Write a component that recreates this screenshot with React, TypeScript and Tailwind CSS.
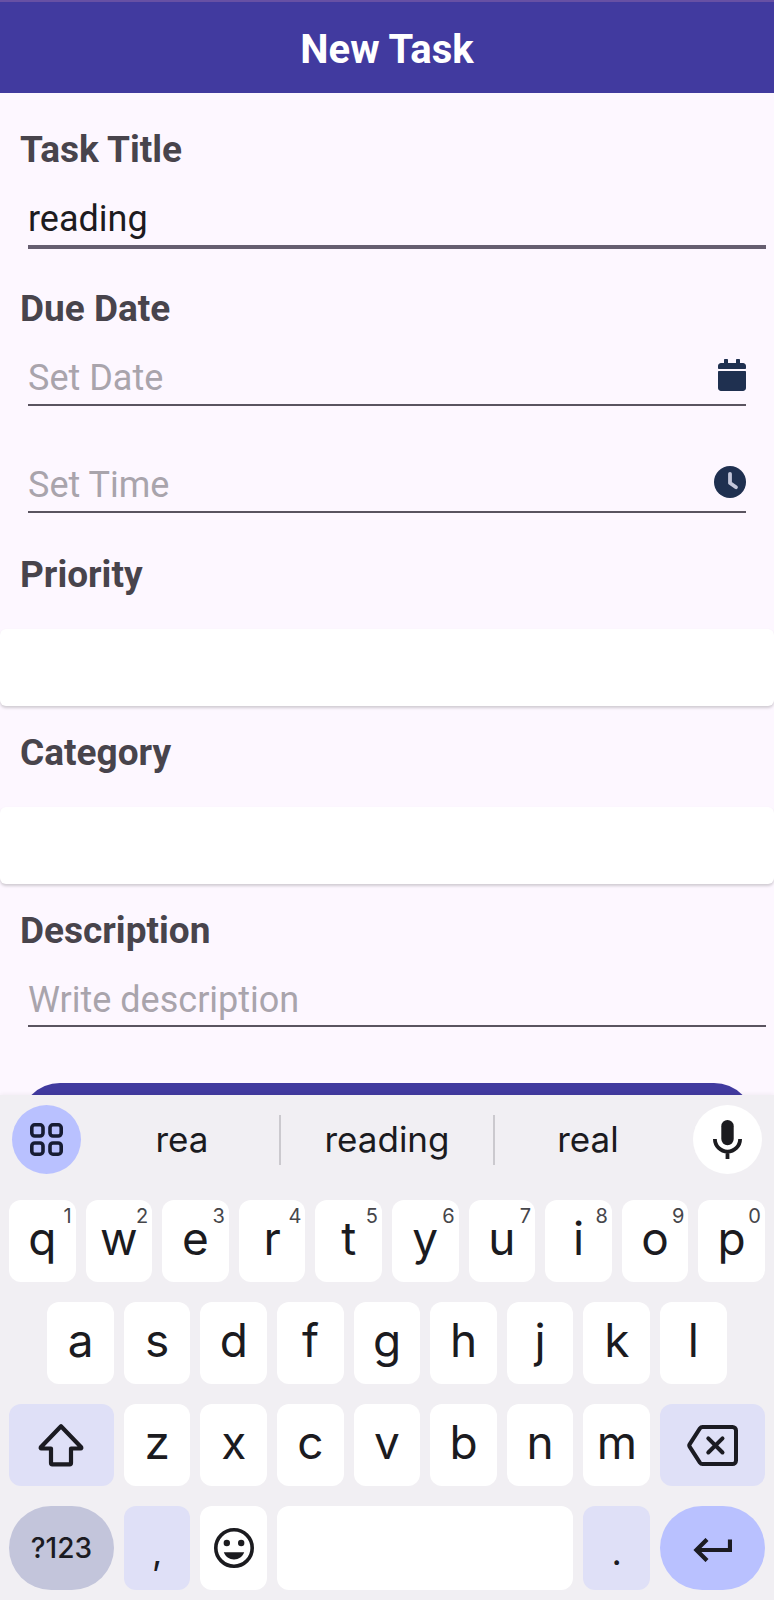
import React, { useState } from "react";
import { FaCalendar } from "react-icons/fa";

const LABEL = "block px-5 text-[37px] leading-[42px] font-bold text-[#48444c]";
const INPUT =
  "block min-w-0 flex-1 bg-transparent text-[36px] leading-[42px] h-[42px] text-[#1d1b20] placeholder:text-[#a9a4ac] outline-none";
const SELECT =
  "block w-full h-[77px] appearance-none rounded-md bg-white px-5 text-[36px] text-[#1d1b20] shadow-[0_2px_3px_rgba(0,0,0,0.18)] outline-none";

function ClockIcon() {
  return (
    <svg viewBox="0 0 32 32" className="size-8" aria-hidden="true">
      <circle cx="16" cy="16" r="16" fill="#1f3050" />
      <path d="M16 7.8V17l6 4.2" fill="none" stroke="#c3c6da" strokeWidth="3.8" strokeLinecap="round" strokeLinejoin="round" />
    </svg>
  );
}

function AppsIcon() {
  return (
    <svg viewBox="0 0 33 33" className="size-[33px]" fill="none" stroke="#171c33" strokeWidth="3.6" aria-hidden="true">
      <rect x="1.8" y="1.8" width="11.2" height="11.2" rx="3" />
      <rect x="20" y="1.8" width="11.2" height="11.2" rx="3" />
      <rect x="1.8" y="20" width="11.2" height="11.2" rx="3" />
      <rect x="20" y="20" width="11.2" height="11.2" rx="3" />
    </svg>
  );
}

function MicIcon() {
  return (
    <svg viewBox="0 0 29 39" className="h-[39px] w-[29px]" aria-hidden="true">
      <rect x="8.3" y="0" width="12.4" height="25.3" rx="6.2" fill="#1b1b1f" />
      <path d="M1.9 19a12.6 12.6 0 0 0 25.2 0M14.5 31v8" fill="none" stroke="#1b1b1f" strokeWidth="3.8" />
    </svg>
  );
}

function ShiftIcon() {
  return (
    <svg viewBox="0 0 46 44" className="h-11 w-[46px]" fill="none" stroke="#1b1b22" strokeWidth="4.2" strokeLinejoin="round" aria-hidden="true">
      <path d="M23 3.2L2.8 24.2q-.5 1.3.6 1.3H13V40q0 1.3 1.3 1.3h17.4q1.3 0 1.3-1.3V25.5h9.600q1.1 0 .6-1.3z" />
    </svg>
  );
}

function BackspaceIcon() {
  return (
    <svg viewBox="0 0 51 41" className="h-[41px] w-[51px]" fill="none" stroke="#1b1b22" strokeWidth="4" strokeLinejoin="round" aria-hidden="true">
      <path d="M15.5 2H45.5a3.500 3.500 0 0 1 3.500 3.500v30a3.500 3.500 0 0 1-3.500 3.500h-30q-1.600 0-2.600-1.400L2.600 21.600q-.7-1.100 0-2.200L12.900 3.400q1-1.400 2.600-1.400z" />
      <path d="M21.300 13.300l14.200 14.200M35.500 13.300L21.300 27.500" strokeLinecap="round" />
    </svg>
  );
}

function EmojiIcon() {
  return (
    <svg viewBox="-20 -20 40 40" className="size-10" fill="#1b1b1f" aria-hidden="true">
      <circle r="18.2" fill="none" stroke="#1b1b1f" strokeWidth="3.6" />
      <circle cx="-7.2" cy="-5" r="3.2" />
      <circle cx="7.2" cy="-5" r="3.2" />
      <path d="M-10.2 4.3h20.4c-1.6 4.4-5.4 7.2-10.2 7.2s-8.600-2.800-10.200-7.200z" />
    </svg>
  );
}

function EnterIcon() {
  return (
    <svg viewBox="0 0 39 24" className="h-6 w-[39px]" fill="none" stroke="#1b1b22" strokeWidth="4.2" aria-hidden="true">
      <path d="M37 1.500V12H3M14 1.400L3.400 12 14 22.600" />
    </svg>
  );
}

const KEY = "relative flex h-[82px] items-center justify-center rounded-xl";
const LETTER = KEY + " col-span-2 bg-white pb-1.5 text-[46px] leading-none text-[#1b1b1f]";
const BOTTOM_KEY = "flex h-[84px] items-center justify-center";
const PUNCTUATION = BOTTOM_KEY + " col-span-2 rounded-xl bg-[#dfe0f7] pt-2 text-[36px] leading-none text-[#1b1b1f]";
const SUGGESTION = "flex items-center justify-center text-[35px] leading-none text-[#1b1b1f]";

function LetterKey({ letter, digit, first }: { letter: string; digit?: string; first?: boolean }) {
  return (
    <button type="button" className={first ? LETTER + " col-start-2" : LETTER}>
      {letter}
      {digit && <span className="absolute top-1.5 right-1 text-[20px] leading-[20px] text-[#46464a]">{digit}</span>}
    </button>
  );
}

export default function App() {
  const [title, setTitle] = useState("reading");

  return (
    <div className="flex h-screen flex-col bg-[#fdf7ff] font-['Roboto',sans-serif]">
      <form className="flex min-h-0 flex-1 flex-col overflow-hidden">
        <header className="flex h-[93px] shrink-0 items-center justify-center border-t-2 border-[#6750a4] bg-[#413a9f] pt-1">
          <h1 className="text-[40px] leading-[48px] font-bold text-white">New Task</h1>
        </header>

        <div className="shrink-0 pt-9">
          <label htmlFor="title" className={LABEL}>Task Title</label>
          <div className="mt-[27px] mr-2 ml-7 flex border-b-4 border-[#665e70] pb-[5px]">
            <input id="title" className={INPUT} value={title} onChange={(e) => setTitle(e.target.value)} />
          </div>

          <label htmlFor="date" className={LABEL + " mt-[39px]"}>Due Date</label>
          <div className="mt-[27px] mr-7 ml-7 flex items-start border-b-2 border-[#5a5460] pb-[5px]">
            <input id="date" className={INPUT} placeholder="Set Date" />
            <FaCalendar className="mt-0.5 h-8 w-7 text-[#1f3050]" />
          </div>
          <div className="mt-[58px] mr-7 ml-7 flex items-start border-b-2 border-[#5a5460] pb-[5px]">
            <input aria-label="Time" className={INPUT} placeholder="Set Time" />
            <span className="mt-0.5"><ClockIcon /></span>
          </div>

          <label htmlFor="priority" className={LABEL + " mt-[41px]"}>Priority</label>
          <select id="priority" className={SELECT + " mt-[33px]"} />

          <label htmlFor="category" className={LABEL + " mt-[26px]"}>Category</label>
          <select id="category" className={SELECT + " mt-[33px]"} />

          <label htmlFor="description" className={LABEL + " mt-[26px]"}>Description</label>
          <div className="mt-[27px] mr-2 ml-7 flex border-b-2 border-[#5a5460] pb-1">
            <input id="description" className={INPUT} placeholder="Write description" />
          </div>

          <div className="mt-14 px-5">
            <button type="button" aria-label="Save" className="block h-20 w-full rounded-full bg-[#413a9f]" />
          </div>
        </div>
      </form>

      <section
        aria-label="Keyboard"
        className="relative shrink-0 bg-[#f1eff3] pt-2.5 pb-2.5 font-['Inter',sans-serif] shadow-[0_-1px_4px_rgba(0,0,0,0.05)]"
      >
        <div className="flex h-[69px] items-center px-3">
          <button type="button" aria-label="Apps" className="flex size-[69px] items-center justify-center rounded-full bg-[#b9c1ff]">
            <AppsIcon />
          </button>
          <div className="grid h-[50px] flex-1 grid-cols-[1fr_216px_1fr]">
            <button type="button" className={SUGGESTION + " pl-1"}>rea</button>
            <button type="button" className={SUGGESTION + " border-x-2 border-[#cbc9ce]"}>reading</button>
            <button type="button" className={SUGGESTION + " pr-3"}>real</button>
          </div>
          <button type="button" aria-label="Voice input" className="flex size-[69px] items-center justify-center rounded-full bg-white">
            <MicIcon />
          </button>
        </div>

        <div className="mt-[26px] grid grid-cols-20 gap-x-2.5 gap-y-5 px-[9px]">
          {"qwertyuiop".split("").map((c, i) => (
            <LetterKey key={c} letter={c} digit={String((i + 1) % 10)} />
          ))}

          {"asdfghjkl".split("").map((c, i) => (
            <LetterKey key={c} letter={c} first={i === 0} />
          ))}

          <button type="button" aria-label="Shift" className={KEY + " col-span-3 col-start-1 bg-[#dfe0f7]"}>
            <ShiftIcon />
          </button>
          {"zxcvbnm".split("").map((c) => (
            <LetterKey key={c} letter={c} />
          ))}
          <button type="button" aria-label="Backspace" className={KEY + " col-span-3 bg-[#dfe0f7]"}>
            <BackspaceIcon />
          </button>

          <button
            type="button"
            className={BOTTOM_KEY + " col-span-3 rounded-full bg-[#c3c5db] text-[28px] leading-none font-medium text-[#1b1b22]"}
          >
            ?123
          </button>
          <button type="button" className={PUNCTUATION}>,</button>
          <button type="button" aria-label="Emoji" className={BOTTOM_KEY + " col-span-2 rounded-xl bg-white"}>
            <EmojiIcon />
          </button>
          <button type="button" aria-label="Space" className={BOTTOM_KEY + " col-span-8 rounded-xl bg-white"} />
          <button type="button" className={PUNCTUATION}>.</button>
          <button type="button" aria-label="Enter" className={BOTTOM_KEY + " col-span-3 rounded-full bg-[#b9c1ff] pt-1"}>
            <EnterIcon />
          </button>
        </div>
      </section>
    </div>
  );
}
